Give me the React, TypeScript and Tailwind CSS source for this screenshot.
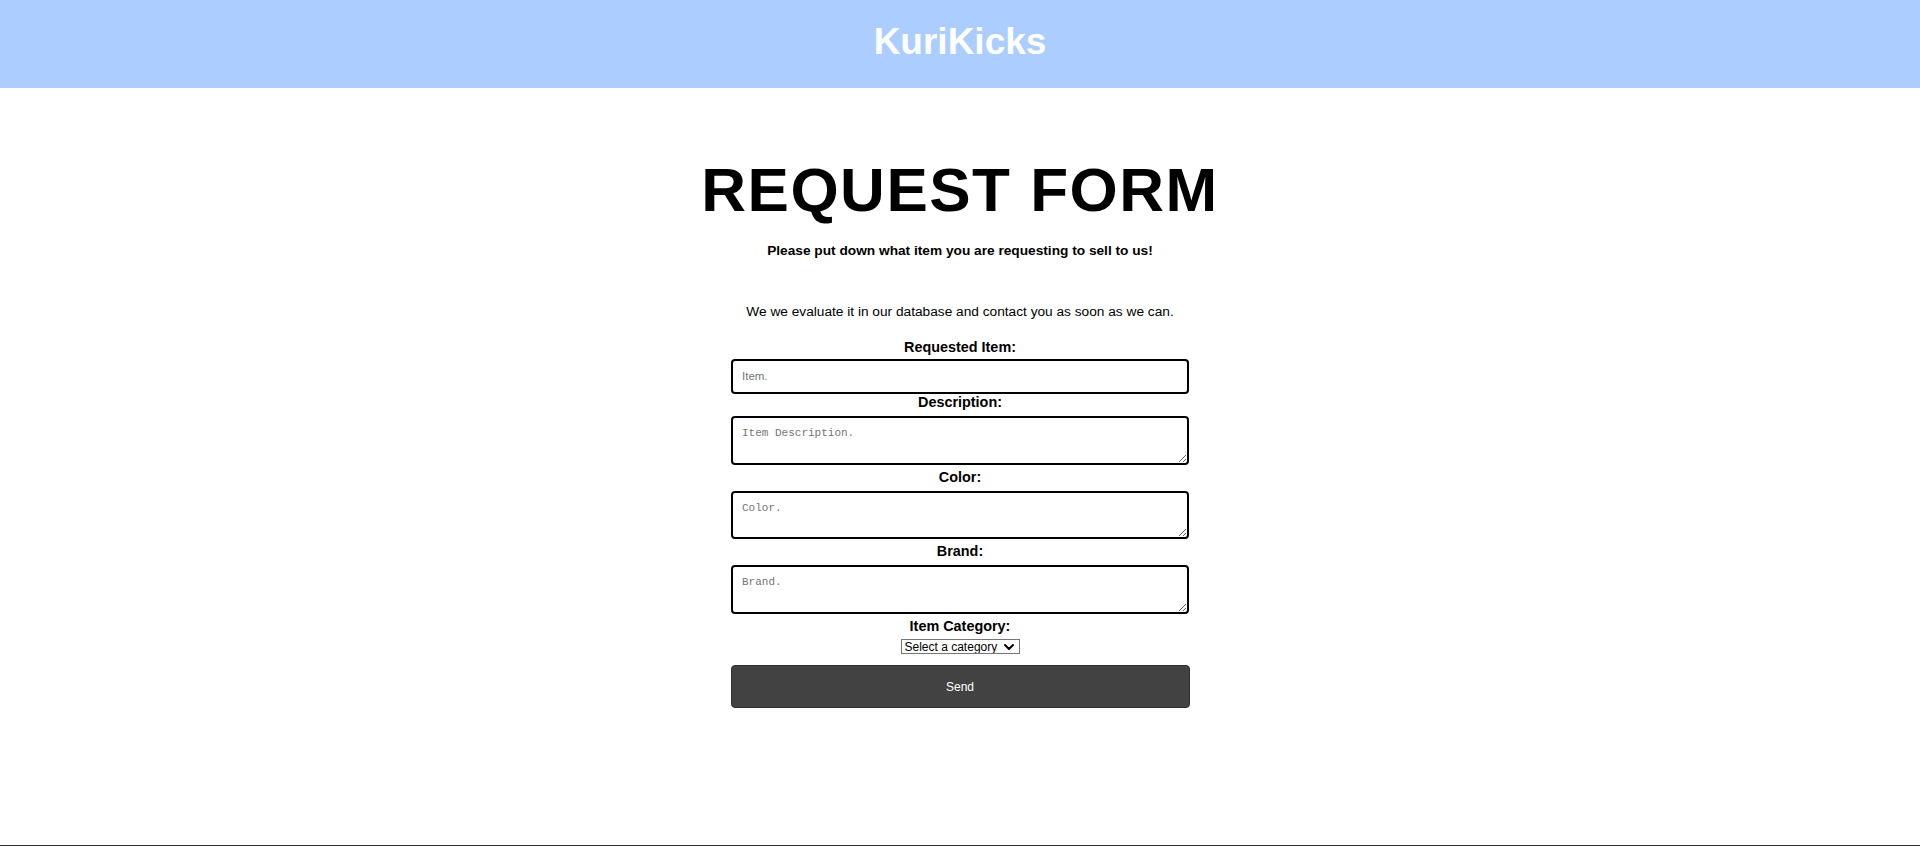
import React from "react";
import { ChevronDown } from "lucide-react";

const textFields = [
	{ label: "Description:", placeholder: "Item Description." },
	{ label: "Color:", placeholder: "Color." },
	{ label: "Brand:", placeholder: "Brand." },
];

export default function App() {
	return (
		<div className="min-h-screen bg-white text-black font-['Liberation_Sans',Arial,sans-serif]">
			<header className="h-[88px] bg-[#abcdff] flex justify-center pt-[22.5px]">
				<h1 className="text-[37px] leading-none font-bold text-white">KuriKicks</h1>
			</header>

			<main className="h-[757px] flex flex-col items-center">
				<h1 className="mt-[71px] text-[62px] leading-none font-bold tracking-[1.5px]">REQUEST FORM</h1>
				<p className="mt-[23px] text-[13.7px] leading-none font-bold">
					Please put down what item you are requesting to sell to us!
				</p>
				<p className="mt-[47px] text-[13.7px] leading-none">
					We we evaluate it in our database and contact you as soon as we can.
				</p>

				<form className="flex flex-col items-center" onSubmit={(e) => e.preventDefault()}>
					<label className="mt-[22px] text-[14.4px] leading-none font-bold">Requested Item:</label>
					<input
						type="text"
						placeholder="Item."
						className="mt-[4px] w-[458px] h-[35px] border-2 border-black rounded-[4px] px-[9px] text-[11.5px] placeholder:text-[#757575] outline-none"
					/>

					{textFields.map((field, idx) => (
						<React.Fragment key={idx}>
							<label
								className={`${idx === 0 ? "mt-[1.5px]" : "mt-[5px]"} text-[14.4px] leading-none font-bold`}
							>
								{field.label}
							</label>
							<textarea
								placeholder={field.placeholder}
								className="mt-[6.5px] w-[458px] h-[48.5px] border-2 border-black rounded-[4px] px-[9px] pt-[10px] text-[11px] leading-none font-['Liberation_Mono',monospace] placeholder:text-[#757575] outline-none block"
							/>
						</React.Fragment>
					))}

					<label className="mt-[5px] text-[14.4px] leading-none font-bold">Item Category:</label>
					<div className="relative mt-[6.5px] w-[119px] h-[15px]">
						<select
							defaultValue=""
							className="block appearance-none w-full h-full border border-[#767676] bg-white text-[12px] leading-none pl-[3px] pr-[14px] py-0 outline-none"
						>
							<option value="" disabled>
								Select a category
							</option>
							<option value="shoes">Shoes</option>
							<option value="clothing">Clothing</option>
							<option value="accessories">Accessories</option>
						</select>
						<ChevronDown
							size={16}
							strokeWidth={3}
							className="absolute right-[3px] top-0 pointer-events-none"
						/>
					</div>

					<button
						type="submit"
						className="mt-[11px] w-[459px] h-[43px] bg-[#424242] border border-[#2e2e2e] rounded-[4px] text-white text-[12px]"
					>
						Send
					</button>
				</form>
			</main>

			<footer className="h-[80px] bg-[#333333]" />
		</div>
	);
}
